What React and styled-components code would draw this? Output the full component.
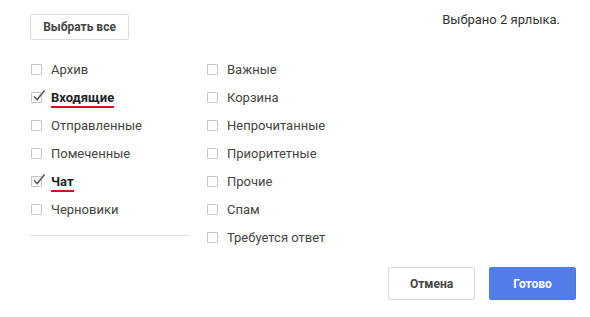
import React from "react";
import styled, { createGlobalStyle } from "styled-components";

const GlobalStyle = createGlobalStyle`
  html, body {
    margin: 0;
    padding: 0;
    background: #ffffff;
  }
  body {
    font-family: Roboto, "Liberation Sans", Arial, sans-serif;
    color: #444;
  }
`;

const Dialog = styled.div`
  width: 590px;
  height: 317px;
  box-sizing: border-box;
  padding: 14px 14px 0 30px;
  display: flex;
  flex-direction: column;
`;

const Header = styled.div`
  display: flex;
  justify-content: space-between;
  align-items: flex-start;
  padding-right: 16px;
`;

const SmallButton = styled.button`
  height: 26px;
  width: 99px;
  box-sizing: border-box;
  border: 1px solid #dcdcdc;
  border-radius: 2px;
  background: #fff;
  font-family: inherit;
  font-size: 12px;
  font-weight: 700;
  color: #444;
  padding: 0;
  cursor: pointer;
`;

const Counter = styled.div`
  font-size: 13px;
  color: #333;
  line-height: 15px;
  margin-top: -2px;
`;

const Columns = styled.div`
  display: flex;
  margin-top: 15px;
`;

const Column = styled.div`
  width: ${(p) => p.$width}px;
  display: flex;
  flex-direction: column;
`;

const Row = styled.label`
  height: 28px;
  display: flex;
  align-items: center;
  gap: 9px;
  font-size: 13px;
  color: ${(p) => (p.$checked ? "#222" : "#444")};
  font-weight: ${(p) => (p.$checked ? 700 : 400)};
  cursor: pointer;
`;

const Box = styled.span`
  position: relative;
  width: 11px;
  height: 11px;
  margin-left: 1px;
  border: 1px solid #c6c6c6;
  border-radius: 1px;
  box-sizing: border-box;
  flex: none;
  background: #fff;
`;

const Tick = styled.svg`
  position: absolute;
  left: 1px;
  top: -4px;
`;

const Label = styled.span`
  display: inline-block;
  line-height: 15px;
  padding-bottom: ${(p) => (p.$marked ? "1px" : "0")};
  border-bottom: ${(p) => (p.$marked ? "2px solid #d5121f" : "none")};
  margin-top: ${(p) => (p.$marked ? "3px" : "0")};
`;

const Divider = styled.div`
  width: 158px;
  height: 1px;
  background: #e3e3e3;
  margin-top: 12px;
`;

const Footer = styled.div`
  display: flex;
  justify-content: flex-end;
  gap: 14px;
  margin-top: 16px;
`;

const ActionButton = styled.button`
  width: 87px;
  height: 33px;
  box-sizing: border-box;
  border-radius: 2px;
  font-family: inherit;
  font-size: 12px;
  font-weight: 700;
  padding: 0;
  cursor: pointer;
  border: 1px solid ${(p) => (p.$primary ? "#4d7be6" : "#dcdcdc")};
  background: ${(p) => (p.$primary ? "#527de8" : "#fff")};
  color: ${(p) => (p.$primary ? "#fff" : "#444")};
`;

const left = [
  { name: "Архив" },
  { name: "Входящие", checked: true },
  { name: "Отправленные" },
  { name: "Помеченные" },
  { name: "Чат", checked: true },
  { name: "Черновики" },
];

const right = [
  { name: "Важные" },
  { name: "Корзина" },
  { name: "Непрочитанные" },
  { name: "Приоритетные" },
  { name: "Прочие" },
  { name: "Спам" },
  { name: "Требуется ответ" },
];

function Item({ name, checked }) {
  return (
    <Row $checked={checked}>
      <Box>
        {checked && (
          <Tick width="13" height="13" viewBox="0 0 13 13">
            <path
              d="M1 7.5 L4.2 10.5 L11.5 1.5"
              fill="none"
              stroke="#5a5a5a"
              strokeWidth="1.6"
            />
          </Tick>
        )}
      </Box>
      <Label $marked={checked}>{name}</Label>
    </Row>
  );
}

export default function App() {
  return (
    <>
      <GlobalStyle />
      <Dialog>
        <Header>
          <SmallButton>Выбрать все</SmallButton>
          <Counter>Выбрано 2 ярлыка.</Counter>
        </Header>
        <Columns>
          <Column $width={176}>
            {left.map((l) => (
              <Item key={l.name} {...l} />
            ))}
            <Divider />
          </Column>
          <Column $width={200}>
            {right.map((l) => (
              <Item key={l.name} {...l} />
            ))}
          </Column>
        </Columns>
        <Footer>
          <ActionButton>Отмена</ActionButton>
          <ActionButton $primary>Готово</ActionButton>
        </Footer>
      </Dialog>
    </>
  );
}
